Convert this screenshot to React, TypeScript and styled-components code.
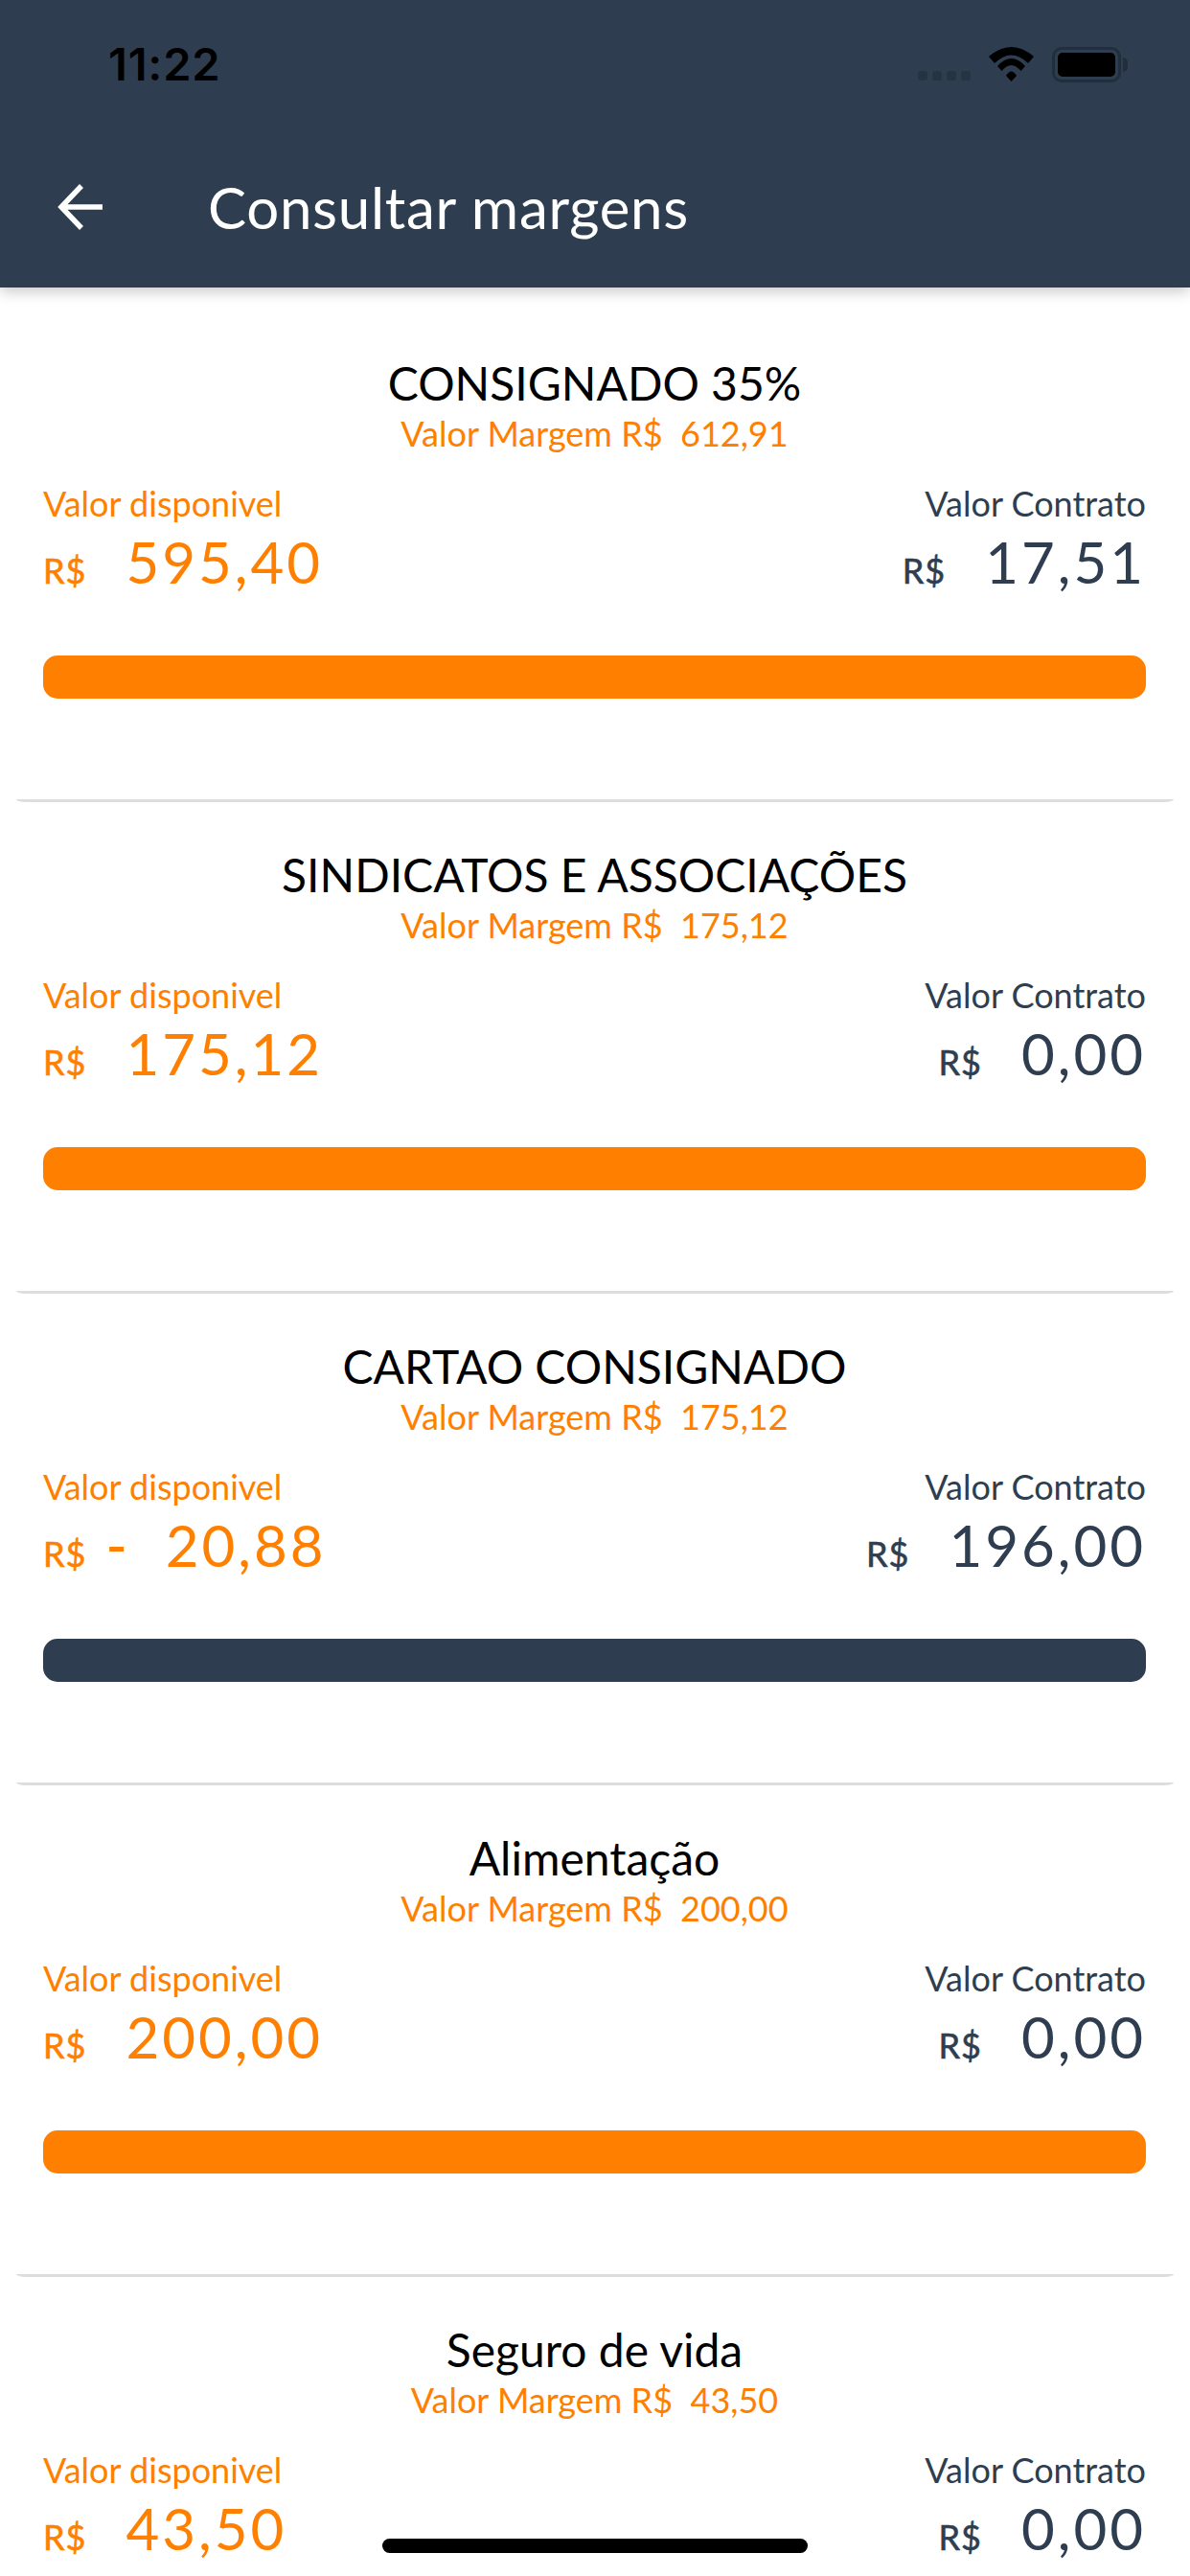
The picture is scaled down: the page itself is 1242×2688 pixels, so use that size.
import React from 'react';
import styled, { createGlobalStyle } from 'styled-components';

interface Margin {
  title: string;
  margin: string;
  available: string;
  contract: string;
  negative?: boolean;
}

const margins: Margin[] = [
  { title: 'CONSIGNADO 35%', margin: '612,91', available: '595,40', contract: '17,51' },
  { title: 'SINDICATOS E ASSOCIAÇÕES', margin: '175,12', available: '175,12', contract: '0,00' },
  { title: 'CARTAO CONSIGNADO', margin: '175,12', available: '20,88', contract: '196,00', negative: true },
  { title: 'Alimentação', margin: '200,00', available: '200,00', contract: '0,00' },
  { title: 'Seguro de vida', margin: '43,50', available: '43,50', contract: '0,00' },
];

const NAVY = '#2e3e50';
const ORANGE = '#ff8000';

const App = () => (
  <Screen>
    <GlobalStyle />
    <Header>
      <StatusBar>
        <Time>11:22</Time>
        <StatusIcons>
          <SignalDots>
            <i />
            <i />
            <i />
            <i />
          </SignalDots>
          <svg width="47" height="36" viewBox="0 0 47 36">
            <path d="M0 10 Q23.5 -10 47 10 L41 17 Q23.5 0 6 17 Z" fill="#000" />
            <path d="M9 20 Q23.5 4 38 20 L33.5 25 Q23.5 13 13.5 25 Z" fill="#000" />
            <path d="M18 30 Q23.5 21 29 30 L23.5 36 Z" fill="#000" />
          </svg>
          <Battery>
            <BatteryFill />
          </Battery>
        </StatusIcons>
      </StatusBar>
      <Toolbar>
        <svg width="48" height="48" viewBox="0 0 48 48">
          <path d="M47 24 H5 M25 2 L4 24 L25 46" fill="none" stroke="#fff" strokeWidth="5.5" />
        </svg>
        <HeaderTitle>Consultar margens</HeaderTitle>
      </Toolbar>
    </Header>
    <List>
      {margins.map((item) => (
        <Card key={item.title}>
          <Title>{item.title}</Title>
          <Subtitle>Valor Margem R$&nbsp; {item.margin}</Subtitle>
          <Values>
            <Column>
              <Label $color={ORANGE}>Valor disponivel</Label>
              <Amount $color={ORANGE}>
                <Currency>R$</Currency>
                {item.negative && <Minus>-</Minus>}
                <Number>{item.available}</Number>
              </Amount>
            </Column>
            <Column $right>
              <Label $color={NAVY}>Valor Contrato</Label>
              <Amount $color={NAVY}>
                <Currency>R$</Currency>
                <Number>{item.contract}</Number>
              </Amount>
            </Column>
          </Values>
          <Bar $color={item.negative ? NAVY : ORANGE} />
        </Card>
      ))}
    </List>
    <HomeIndicator />
  </Screen>
);

const GlobalStyle = createGlobalStyle`
  html, body {
    margin: 0;
    padding: 0;
    background: #ffffff;
  }
`;

const Screen = styled.div`
  position: relative;
  width: 1242px;
  height: 2688px;
  overflow: hidden;
  background: #ffffff;
  font-family: 'Lato', 'Liberation Sans', sans-serif;
`;

const Header = styled.header`
  position: relative;
  z-index: 1;
  height: 300px;
  background: ${NAVY};
  box-shadow: 0 4px 14px rgba(0, 0, 0, 0.22);
`;

const StatusBar = styled.div`
  display: flex;
  justify-content: space-between;
  align-items: flex-start;
  height: 132px;
  padding: 49px 72px 0 113px;
  box-sizing: border-box;
`;

const Time = styled.span`
  font-family: 'Inter', 'Liberation Sans', sans-serif;
  font-size: 47px;
  font-weight: 600;
  line-height: 36px;
  letter-spacing: 0.8px;
  color: #000000;
`;

const StatusIcons = styled.div`
  display: flex;
  align-items: flex-end;
  gap: 19px;
  height: 36px;
`;

const SignalDots = styled.div`
  display: flex;
  gap: 5px;
  margin-bottom: 1px;
  i {
    display: block;
    width: 10px;
    height: 10px;
    border-radius: 3px;
    background: #263442;
  }
`;

const Battery = styled.div`
  position: relative;
  width: 72px;
  height: 37px;
  margin-bottom: -1px;
  padding: 3px;
  box-sizing: border-box;
  border: 3px solid #212e3b;
  border-radius: 10px;
  &::after {
    content: '';
    position: absolute;
    right: -10px;
    top: 8px;
    width: 5px;
    height: 15px;
    border-radius: 0 5px 5px 0;
    background: #212e3b;
  }
`;

const BatteryFill = styled.div`
  height: 100%;
  border-radius: 5px;
  background: #000000;
`;

const Toolbar = styled.div`
  display: flex;
  align-items: center;
  height: 168px;
  padding-left: 60px;
  gap: 109px;
`;

const HeaderTitle = styled.h1`
  margin: 0;
  font-size: 60px;
  font-weight: 400;
  letter-spacing: 0.7px;
  color: #ffffff;
`;

const List = styled.main`
  display: flex;
  flex-direction: column;
`;

const Card = styled.section`
  height: 513px;
  padding: 46px 29px 0 28px;
  margin: 0 17px;
  box-sizing: border-box;
  border-bottom: 3px solid #dddddd;
  border-radius: 0 0 10px 10px / 0 0 3px 3px;
  &:first-child {
    height: 537px;
    padding-top: 70px;
  }
`;

const Title = styled.h2`
  margin: 0;
  font-size: 48px;
  font-weight: 400;
  line-height: 60px;
  text-align: center;
  color: #000000;
`;

const Subtitle = styled.p`
  margin: 0;
  font-size: 36px;
  line-height: 44px;
  text-align: center;
  color: ${ORANGE};
`;

const Values = styled.div`
  display: flex;
  justify-content: space-between;
  margin-top: 29px;
`;

const Column = styled.div<{ $right?: boolean }>`
  display: flex;
  flex-direction: column;
  align-items: ${(p) => (p.$right ? 'flex-end' : 'flex-start')};
`;

const Label = styled.span<{ $color: string }>`
  font-size: 36px;
  line-height: 44px;
  color: ${(p) => p.$color};
`;

const Amount = styled.div<{ $color: string }>`
  display: flex;
  align-items: baseline;
  margin-top: 3px;
  color: ${(p) => p.$color};
  line-height: 72px;
`;

const Currency = styled.span`
  font-size: 36px;
  letter-spacing: 1px;
  -webkit-text-stroke: 0.6px currentColor;
  margin-right: 41px;
`;

const Minus = styled.span`
  font-size: 60px;
  font-weight: 500;
  margin: 0 40px 0 -21px;
`;

const Number = styled.span`
  font-size: 60px;
  letter-spacing: 3px;
`;

const Bar = styled.div<{ $color: string }>`
  height: 45px;
  margin-top: 53px;
  border-radius: 15px;
  background: ${(p) => p.$color};
`;

const HomeIndicator = styled.div`
  position: absolute;
  left: 399px;
  bottom: 24px;
  width: 444px;
  height: 15px;
  border-radius: 8px;
  background: #000000;
`;

export default App;
